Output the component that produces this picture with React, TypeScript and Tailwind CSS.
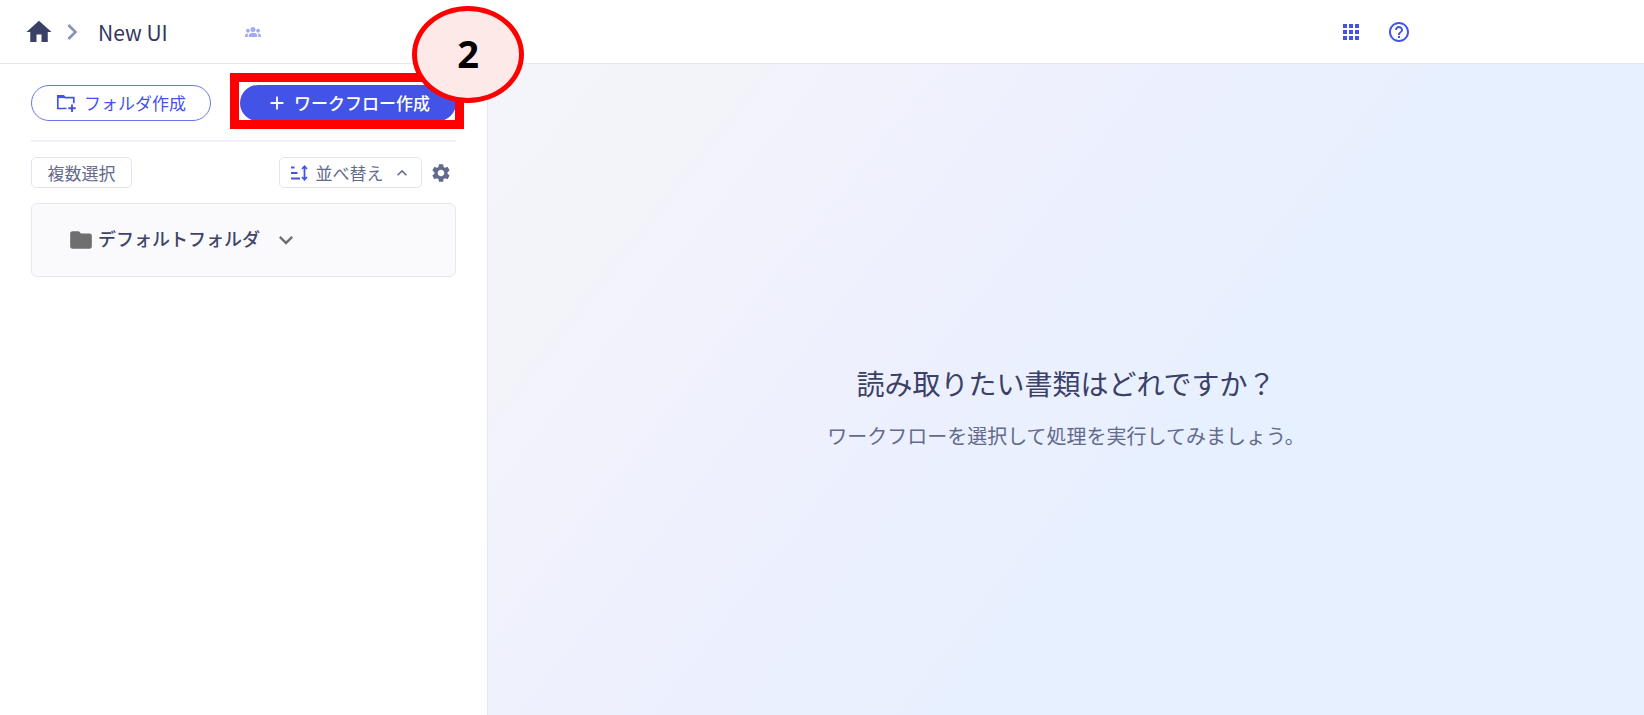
import type { ReactNode } from 'react';
import {
  MdAdd,
  MdApps,
  MdChevronRight,
  MdExpandLess,
  MdExpandMore,
  MdFolder,
  MdHelpOutline,
  MdHome,
  MdSettings,
} from 'react-icons/md';

function GroupIcon() {
  return (
    <svg width="16" height="10" viewBox="0 0 16 10" fill="currentColor">
      <circle cx="8" cy="2.5" r="2.5" />
      <circle cx="2.9" cy="3.7" r="1.9" />
      <circle cx="13.1" cy="3.7" r="1.9" />
      <path d="M3.8 10V8.4C3.8 6.7 5.6 5.8 8 5.8s4.2.9 4.2 2.6V10z" />
      <path d="M0 10V8.6c0-1.3.9-2.2 3.2-2.2-.4.6-.5 1.3-.5 2V10zM16 10V8.6c0-1.3-.9-2.2-3.2-2.2.4.6.5 1.3.5 2V10z" />
    </svg>
  );
}

function FolderPlusIcon() {
  return (
    <svg width="20" height="18" viewBox="0 0 20 18" fill="none" stroke="currentColor" strokeWidth="1.7">
      <path d="M10.5 14.5H1.8V1.8h5.6l1.6 1.8h8.8v5.6" />
      <path d="M1.8 2.8h6.4" strokeWidth="2.6" />
      <path d="M16 10.5v7.5M12.3 14.3h7.4" strokeWidth="1.9" />
    </svg>
  );
}

function SortIcon() {
  return (
    <svg width="18" height="16" viewBox="0 0 18 16" fill="none" stroke="currentColor" strokeWidth="1.8">
      <path d="M1 2.5h3.5M1 8h6.5M1 13.5h9" />
      <path d="M14.5 2v12" />
      <path d="M12 4l2.5-2.6L17 4M12 12l2.5 2.6L17 12" />
    </svg>
  );
}

function Header() {
  return (
    <header className="flex h-16 items-center justify-between border-b border-[#e6e7f2] bg-white pl-6">
      <nav className="flex items-center">
        <a href="#" aria-label="ホーム" className="text-[#3b4066]">
          <MdHome size={30} />
        </a>
        <MdChevronRight size={32} className="ml-0.5 text-[#8b90b8]" />
        <span className="ml-2.5 text-[21px] leading-7 text-[#33375c]">New UI</span>
        <span className="ml-[77px] text-[#a3aaf2]">
          <GroupIcon />
        </span>
      </nav>
      <div className="mr-[233px] flex items-center gap-6 text-[#4353e6]">
        <button type="button" aria-label="アプリ">
          <MdApps size={24} />
        </button>
        <button type="button" aria-label="ヘルプ">
          <MdHelpOutline size={24} />
        </button>
      </div>
    </header>
  );
}

// Red frame with a numbered badge over the control it wraps
function Step({ number, children }: { number: number; children: ReactNode }) {
  return (
    <div className="relative">
      {children}
      <div className="pointer-events-none absolute -top-3 -right-2 -bottom-2 -left-2.5 border-[9px] border-[#ff0000]" />
      <div className="pointer-events-none absolute -top-[79px] -right-[68px] flex h-[97px] w-28 items-center justify-center rounded-[50%] border-[5px] border-[#ff0000] bg-[#fde9e7] pb-1 font-['Open_Sans',sans-serif] text-[38px] leading-none font-bold text-black">
        {number}
      </div>
    </div>
  );
}

function Sidebar() {
  return (
    <aside className="w-[488px] shrink-0 border-r border-[#e6e7f2] bg-white pt-[21px] pr-[31px] pl-[31px]">
      <div className="flex justify-between border-b-2 border-[#f0f1f8] pb-[19px]">
        <button
          type="button"
          className="flex h-9 w-[180px] items-center justify-center gap-2 rounded-full border border-[#6a77ec] text-[17px] text-[#4353e6]"
        >
          <FolderPlusIcon />
          フォルダ作成
        </button>
        <Step number={2}>
          <button
            type="button"
            className="flex h-9 w-[216px] items-center justify-center gap-1.5 rounded-full bg-[#4353e6] text-[17px] font-medium text-white"
          >
            <MdAdd size={22} />
            ワークフロー作成
          </button>
        </Step>
      </div>

      <div className="mt-[15px] flex items-center justify-between text-[17px] text-[#646a8c]">
        <button type="button" className="h-[31px] w-[101px] rounded-[5px] border border-[#e3e4f1]">
          複数選択
        </button>
        <div className="flex items-center gap-2 pr-1">
          <button
            type="button"
            className="flex h-[31px] w-[143px] items-center justify-center gap-2 rounded-[5px] border border-[#e3e4f1]"
          >
            <span className="text-[#4353e6]">
              <SortIcon />
            </span>
            並べ替え
            <MdExpandLess size={20} />
          </button>
          <button type="button" aria-label="設定">
            <MdSettings size={22} />
          </button>
        </div>
      </div>

      <section className="mt-[15px] flex h-[74px] items-center rounded-md border border-[#e6e7f2] bg-[#fafafd] pl-9">
        <MdFolder size={26} className="text-[#6f6f6f]" />
        <h2 className="ml-1 pb-1 text-lg leading-7 font-medium text-[#3f4468]">デフォルトフォルダ</h2>
        <button type="button" aria-label="フォルダを開く" className="ml-3 text-[#6f6f6f]">
          <MdExpandMore size={28} />
        </button>
      </section>
    </aside>
  );
}

export default function App() {
  return (
    <div className="flex min-h-screen flex-col bg-white font-['Noto_Sans_CJK_JP',sans-serif]">
      <Header />
      <div className="flex flex-1">
        <Sidebar />
        <main className="flex flex-1 flex-col items-center justify-center gap-[17px] bg-[linear-gradient(128deg,#f4f5fa_0%,#f3f4fa_14%,#eef0fd_35%,#e6f0ff_64%)] pt-9">
          <h1 className="text-[28px] leading-10 text-[#3b4066]">読み取りたい書類はどれですか？</h1>
          <p className="text-xl leading-8 text-[#646a8c]">ワークフローを選択して処理を実行してみましょう。</p>
        </main>
      </div>
    </div>
  );
}
